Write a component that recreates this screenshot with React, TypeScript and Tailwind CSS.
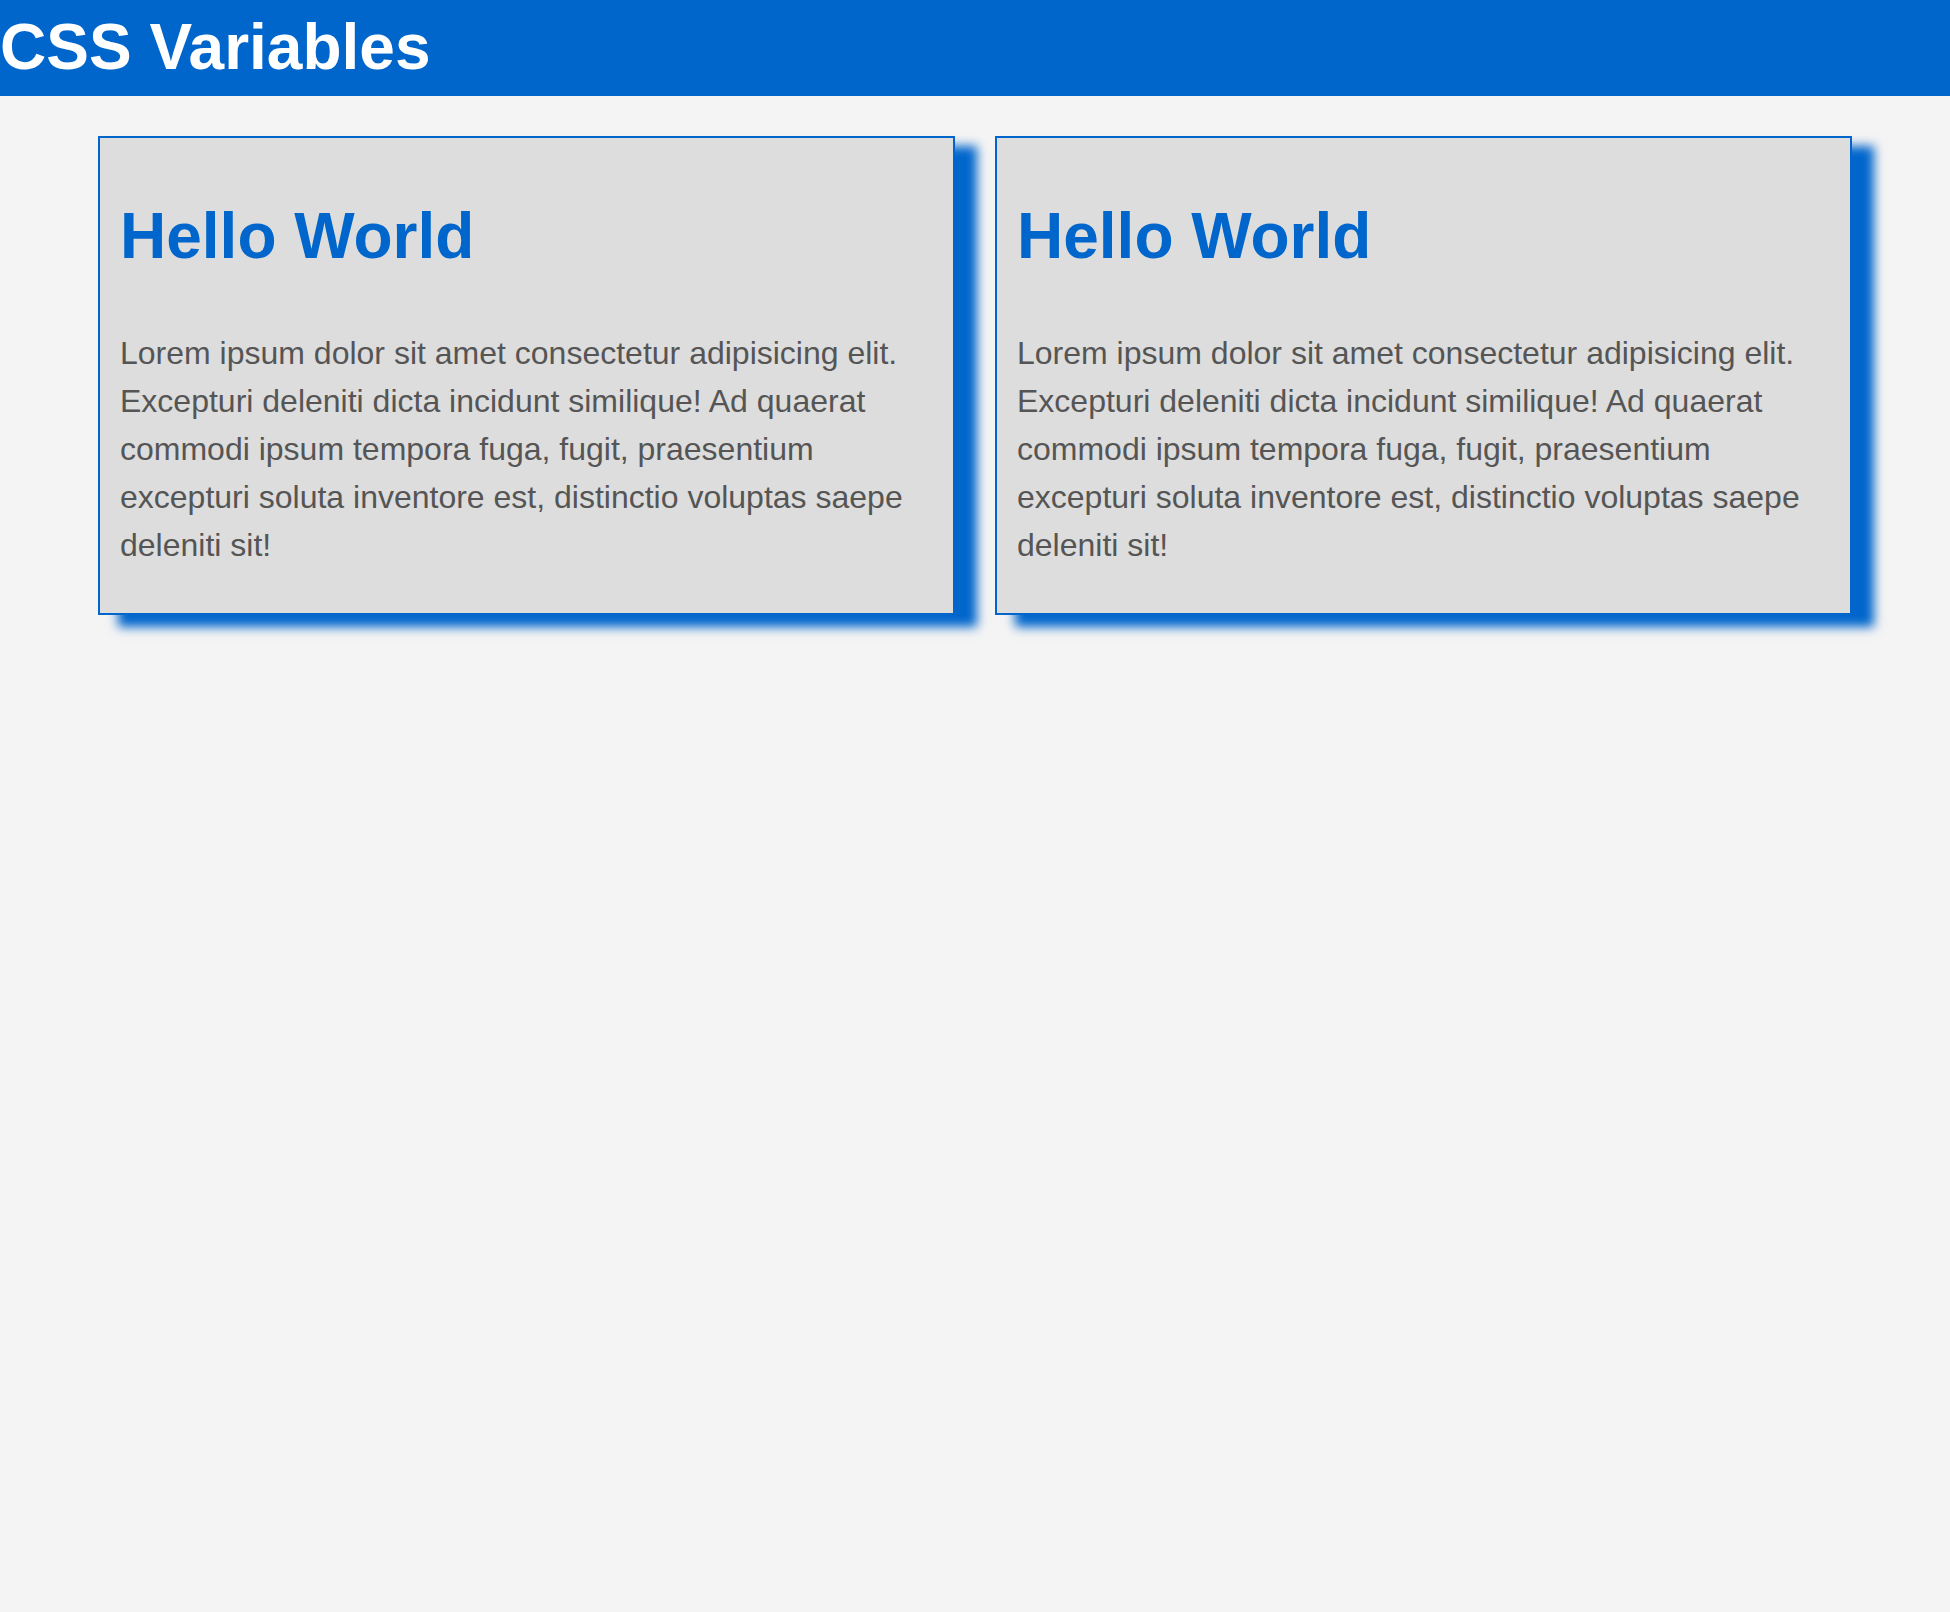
import React from "react";

const text =
  "Lorem ipsum dolor sit amet consectetur adipisicing elit. Excepturi deleniti dicta incidunt similique! Ad quaerat commodi ipsum tempora fuga, fugit, praesentium excepturi soluta inventore est, distinctio voluptas saepe deleniti sit!";

const Card = () => {
  return (
    <div className="bg-[#dddddd] border-2 border-[#0066cc] px-[20px] pt-[62px] pb-[44px] shadow-[21px_11px_10px_1px_#0066cc]">
      <h2 className="text-[64px] font-bold leading-[1.15] text-[#0066cc] mb-[55px]">
        Hello World
      </h2>
      <p className="text-[32px] leading-[48px] text-[#555555]">{text}</p>
    </div>
  );
};

export default function App() {
  return (
    <div
      className="min-h-screen bg-[#f4f4f4]"
      style={{ fontFamily: '"Liberation Sans", Arial, sans-serif' }}
    >
      <header className="h-[96px] bg-[#0066cc] flex items-center">
        <h1 className="text-[64px] font-bold leading-[1.15] text-white">
          CSS Variables
        </h1>
      </header>
      <main className="px-[98px] pt-[40px]">
        <div className="grid grid-cols-2 gap-[40px]">
          <Card />
          <Card />
        </div>
      </main>
    </div>
  );
}
